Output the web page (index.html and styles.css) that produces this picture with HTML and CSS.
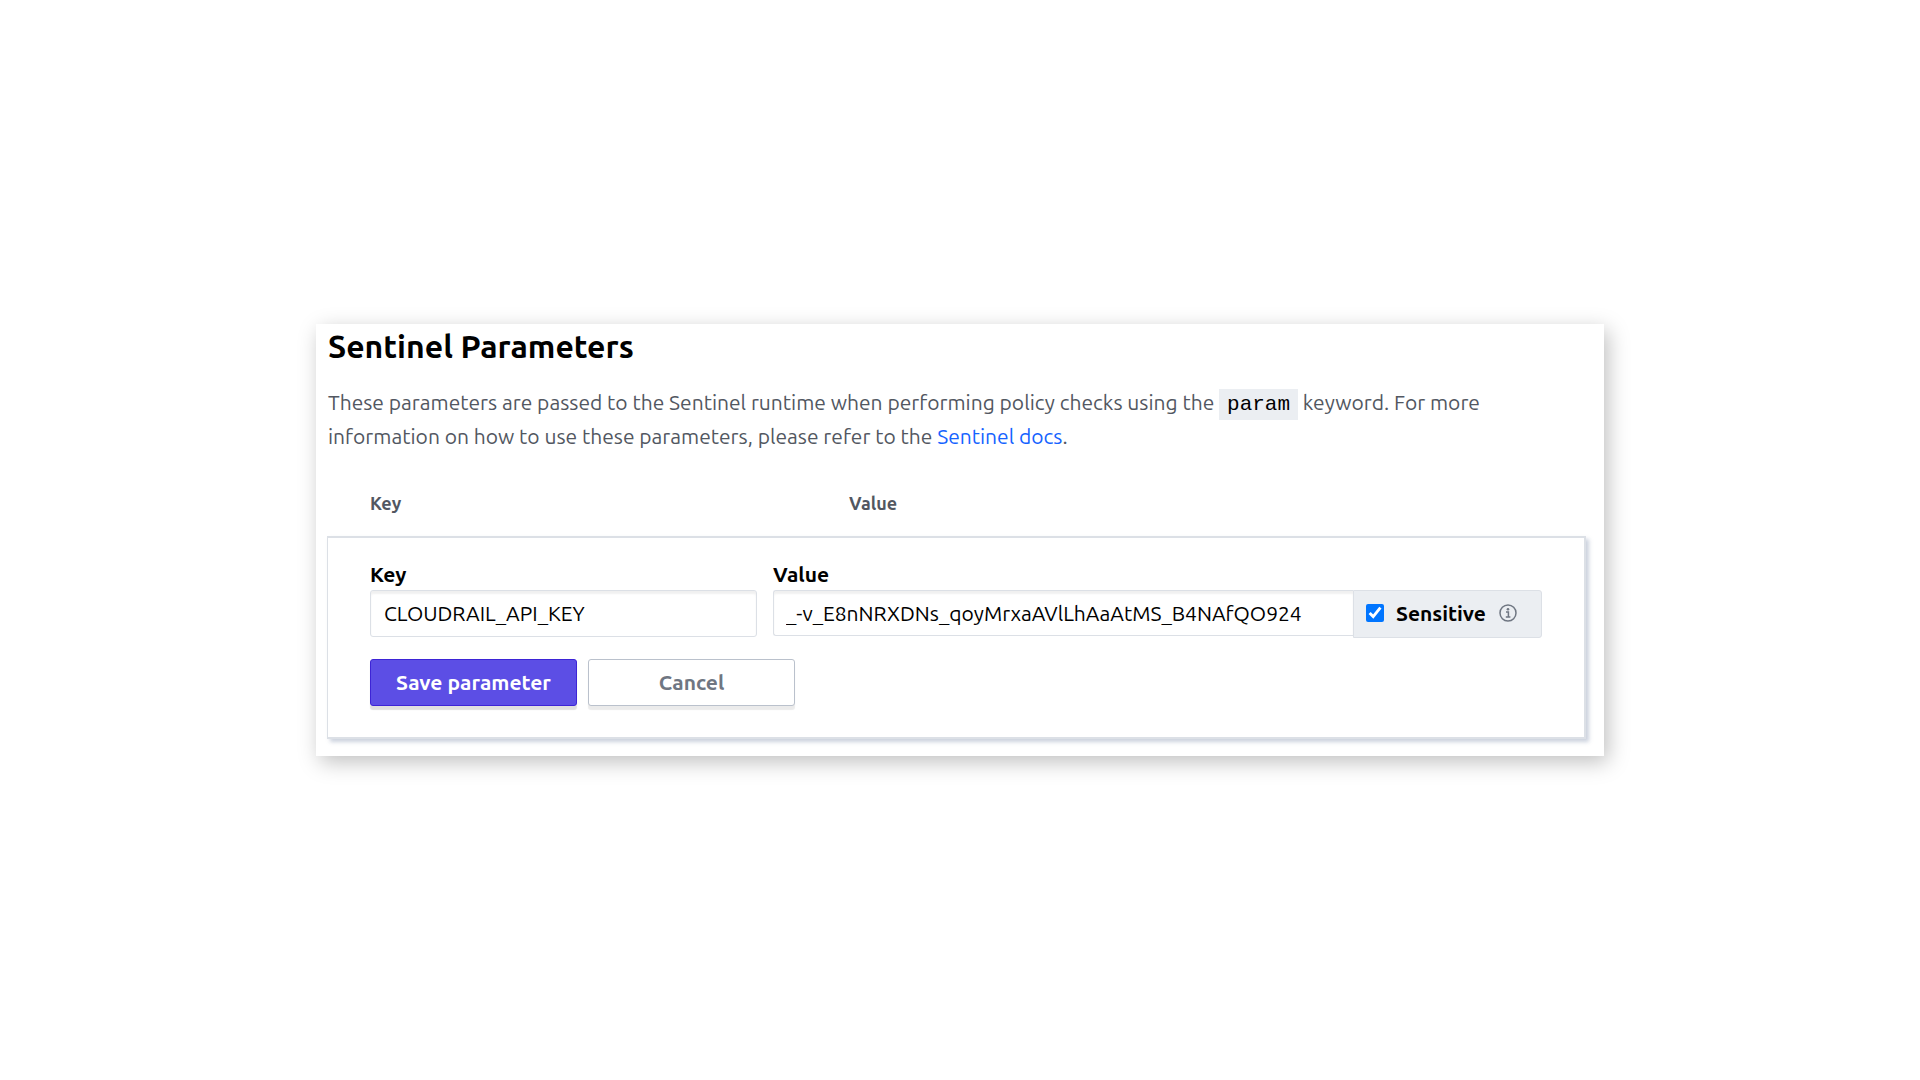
FILE: index.html
```html
<!DOCTYPE html>
<html lang="en">
<head>
<meta charset="utf-8">
<meta name="viewport" content="width=device-width, initial-scale=1">
<title>Sentinel Parameters</title>
<link rel="stylesheet" href="styles.css">
</head>
<body>
<main class="card">
  <h1 class="title">Sentinel Parameters</h1>
  <p class="intro">These parameters are passed to the Sentinel runtime when performing policy checks using the <code class="code">param</code> keyword. For more information on how to use these parameters, please refer to the <a class="link" href="#docs">Sentinel docs</a>.</p>
  <div class="columns"><span>Key</span><span>Value</span></div>
  <form class="panel">
    <div class="fields">
      <div class="field">
        <label class="label" for="key">Key</label>
        <input class="input" id="key" type="text" value="CLOUDRAIL_API_KEY">
      </div>
      <div class="field">
        <label class="label" for="value">Value</label>
        <div class="group">
          <input class="input input-joined" id="value" type="text" value="_-v_E8nNRXDNs_qoyMrxaAVlLhAaAtMS_B4NAfQO924">
          <div class="addon">
            <input class="check" id="sensitive" type="checkbox" checked>
            <label class="addon-label" for="sensitive">Sensitive</label>
            <svg class="info" viewBox="0 0 18 18" aria-hidden="true">
              <circle cx="9" cy="9" r="8" fill="none" stroke="currentColor" stroke-width="1.5"/>
              <circle cx="9" cy="5.2" r="1.3" fill="currentColor"/>
              <path d="M7 8h2.4v5M6.8 13h4.6" fill="none" stroke="currentColor" stroke-width="1.5"/>
            </svg>
          </div>
        </div>
      </div>
    </div>
    <div class="actions">
      <button class="button button-primary" type="button">Save parameter</button>
      <button class="button" type="button">Cancel</button>
    </div>
  </form>
</main>
</body>
</html>
```
FILE: styles.css
```css
* { box-sizing: border-box; }
body {
  margin: 0;
  min-height: 100vh;
  display: flex;
  align-items: center;
  justify-content: center;
  background: #fff;
  color: #000;
  font: 21px/34px Ubuntu, "Noto Sans", sans-serif;
}
.card {
  width: 100%;
  max-width: 1288px;
  padding: 2px 18px 17px 11px;
  background: #fff;
  box-shadow: 4px 6px 20px rgba(0, 0, 0, 0.25);
}
.title {
  margin: 0 0 19px;
  padding-left: 1px;
  font-size: 32px;
  line-height: 40px;
  font-weight: 700;
}
.intro {
  margin: 0 0 38px;
  padding-left: 1px;
  color: #525761;
}
.code {
  padding: 4px 8px;
  background: #ebeef2;
  color: #000;
  font: 21px/24px "Liberation Mono", monospace;
}
.link { color: #1563ff; text-decoration: none; }
.columns {
  display: grid;
  grid-template-columns: 479px 1fr;
  padding: 0 43px;
  margin-bottom: 21px;
  color: #525761;
  font-size: 18px;
  line-height: 24px;
  font-weight: 700;
}
.panel {
  padding: 20px 42px 31px;
  border: 2px solid #dce0e6;
  border-left-width: 1px;
  box-shadow: 3px 3px 4px rgba(110, 125, 160, 0.35);
}
.fields {
  display: grid;
  grid-template-columns: 387fr 769fr;
  gap: 16px;
}
.field { display: flex; flex-direction: column; min-width: 0; }
.label { font-weight: 700; line-height: 32px; }
.input {
  width: 100%;
  height: 47px;
  padding: 0 13px 1px;
  border: 1px solid #dce0e6;
  border-radius: 3px;
  box-shadow: inset 0 3px 2px rgba(0, 0, 0, 0.06);
  background: #fff;
  color: #000;
  font: inherit;
}
.group { display: flex; align-items: flex-start; }
.input-joined {
  flex: 1;
  min-width: 0;
  height: 46px;
  padding: 0 12px;
  border-right: 0;
  border-radius: 3px 0 0 3px;
}
.addon {
  display: flex;
  align-items: center;
  width: 189px;
  height: 48px;
  padding: 0 12px 2px;
  border: 1px solid #dce0e6;
  border-radius: 0 3px 3px 0;
  background: #ebeef2;
}
.check { width: 18px; height: 18px; margin: 0 12px 0 0; accent-color: #0075ff; }
.addon-label { font-weight: 700; }
.info { width: 18px; height: 18px; margin-left: 13px; color: #6f7682; }
.actions { display: flex; gap: 11px; margin-top: 21px; }
.button {
  width: 207px;
  height: 47px;
  padding: 0 0 2px;
  border: 1px solid #bac1cc;
  border-radius: 3px;
  background: #fff;
  box-shadow: 0 4px 1px rgba(0, 0, 0, 0.08);
  color: #6f7682;
  font: inherit;
  font-weight: 700;
}
.button-primary {
  border-color: #3d24d6;
  background: #5c4ee5;
  color: #fff;
  box-shadow: 0 4px 1px rgba(0, 0, 0, 0.12);
}
```
